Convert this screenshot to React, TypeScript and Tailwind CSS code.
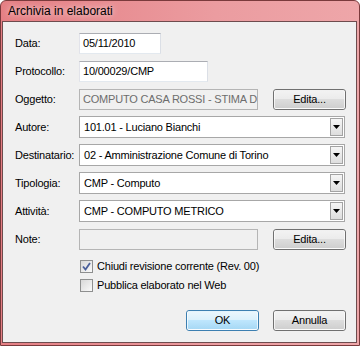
import React from "react";

const FONT = "font-['Liberation_Sans',Arial,sans-serif]";

function TextBox({ value, w, disabled }: { value: string; w: string; disabled?: boolean }) {
  return (
    <div
      className={`${w} h-[21px] flex items-center pl-[3px] overflow-hidden whitespace-nowrap border ${
        disabled
          ? "bg-[#f0f0f0] border-[#b5b5b5] text-[#6d6d6d]"
          : "bg-white border-t-[#abadb3] border-l-[#e2e3ea] border-r-[#dbdfe6] border-b-[#e3e9ef] text-black"
      }`}
    >
      {value}
    </div>
  );
}

function Button({ label, w = "w-[73px]", primary }: { label: string; w?: string; primary?: boolean }) {
  return (
    <div
      className={`${w} h-[21px] rounded-[3px] border flex items-center justify-center relative overflow-hidden ${
        primary ? "border-[#3c7fb1]" : "border-[#707070]"
      }`}
    >
      <div
        className={`absolute inset-0 rounded-[2px] border border-white/70 ${
          primary
            ? "bg-[linear-gradient(#eaf6fd_0%,#d9f0fc_50%,#bee6fd_50%,#a7d9f5_100%)]"
            : "bg-[linear-gradient(#f2f2f2_0%,#ebebeb_50%,#dddddd_50%,#cfcfcf_100%)]"
        }`}
      />
      <span className="relative">{label}</span>
    </div>
  );
}

function Combo({ value }: { value: string }) {
  return (
    <div className="w-[266px] h-[22px] bg-white border border-[#a7a7a7] flex items-center">
      <div className="flex-1 pl-[4px] whitespace-nowrap overflow-hidden">{value}</div>
      <div className="w-[13px] h-[18px] mr-[1px] border border-[#a3a3a3] bg-[linear-gradient(#f6f6f6,#dedede)] flex items-center justify-center">
        <svg width="7" height="4" viewBox="0 0 7 4">
          <path d="M0 0H7L3.5 4Z" fill="#000" />
        </svg>
      </div>
    </div>
  );
}

function Row({ label, children }: { label: string; children: React.ReactNode }) {
  return (
    <div className="h-[28px] flex items-center">
      <div className="w-[64px]">{label}</div>
      {children}
    </div>
  );
}

function Check({ checked, label }: { checked?: boolean; label: string }) {
  return (
    <div className="h-[19px] flex items-center pl-[65px]">
      <div className="w-[13px] h-[13px] border border-[#8e8f8f] bg-[linear-gradient(135deg,#d8d8d8,#fafafa)] flex items-center justify-center">
        {checked && (
          <svg width="9" height="9" viewBox="0 0 9 9">
            <path d="M1 4.5L3.5 7.5L8 1" fill="none" stroke="#4a5f9a" strokeWidth="1.8" />
          </svg>
        )}
      </div>
      <span className="ml-[4px]">{label}</span>
    </div>
  );
}

export default function App() {
  return (
    <div className={`${FONT} w-[360px] h-[346px] flex flex-col border border-[#7a3a3c] rounded-t-[6px] bg-[linear-gradient(90deg,#e57f84,#eb9ca0_60%,#eea6a9)] text-[11px] tracking-[-0.2px] text-black`}>
      <div className="h-[20px] flex items-center pl-[7px] text-[12px] tracking-normal [text-shadow:0_0_6px_rgba(255,255,255,0.9)]">
        Archivia in elaborati
      </div>
      <div className="flex-1 ml-[1px] mr-[2px] mb-[2px] bg-[#f0f0f0] border border-[#6e4c4e] pl-[12px] pt-[7px] pr-[10px] flex flex-col">
        <Row label="Data:">
          <TextBox value="05/11/2010" w="w-[82px]" />
        </Row>
        <Row label="Protocollo:">
          <TextBox value="10/00029/CMP" w="w-[129px]" />
        </Row>
        <Row label="Oggetto:">
          <TextBox value="COMPUTO CASA ROSSI - STIMA D" w="w-[179px]" disabled />
          <div className="ml-[15px]">
            <Button label="Edita..." />
          </div>
        </Row>
        <Row label="Autore:">
          <Combo value="101.01 - Luciano Bianchi" />
        </Row>
        <Row label="Destinatario:">
          <Combo value="02 - Amministrazione Comune di Torino" />
        </Row>
        <Row label="Tipologia:">
          <Combo value="CMP - Computo" />
        </Row>
        <Row label="Attività:">
          <Combo value="CMP - COMPUTO METRICO" />
        </Row>
        <Row label="Note:">
          <TextBox value="" w="w-[179px]" disabled />
          <div className="ml-[15px]">
            <Button label="Edita..." />
          </div>
        </Row>
        <div className="mt-[4px]">
          <Check checked label="Chiudi revisione corrente (Rev. 00)" />
          <Check label="Pubblica elaborato nel Web" />
        </div>
        <div className="mt-[15px] flex justify-end gap-[14px]">
          <Button label="OK" primary />
          <Button label="Annulla" />
        </div>
      </div>
    </div>
  );
}
